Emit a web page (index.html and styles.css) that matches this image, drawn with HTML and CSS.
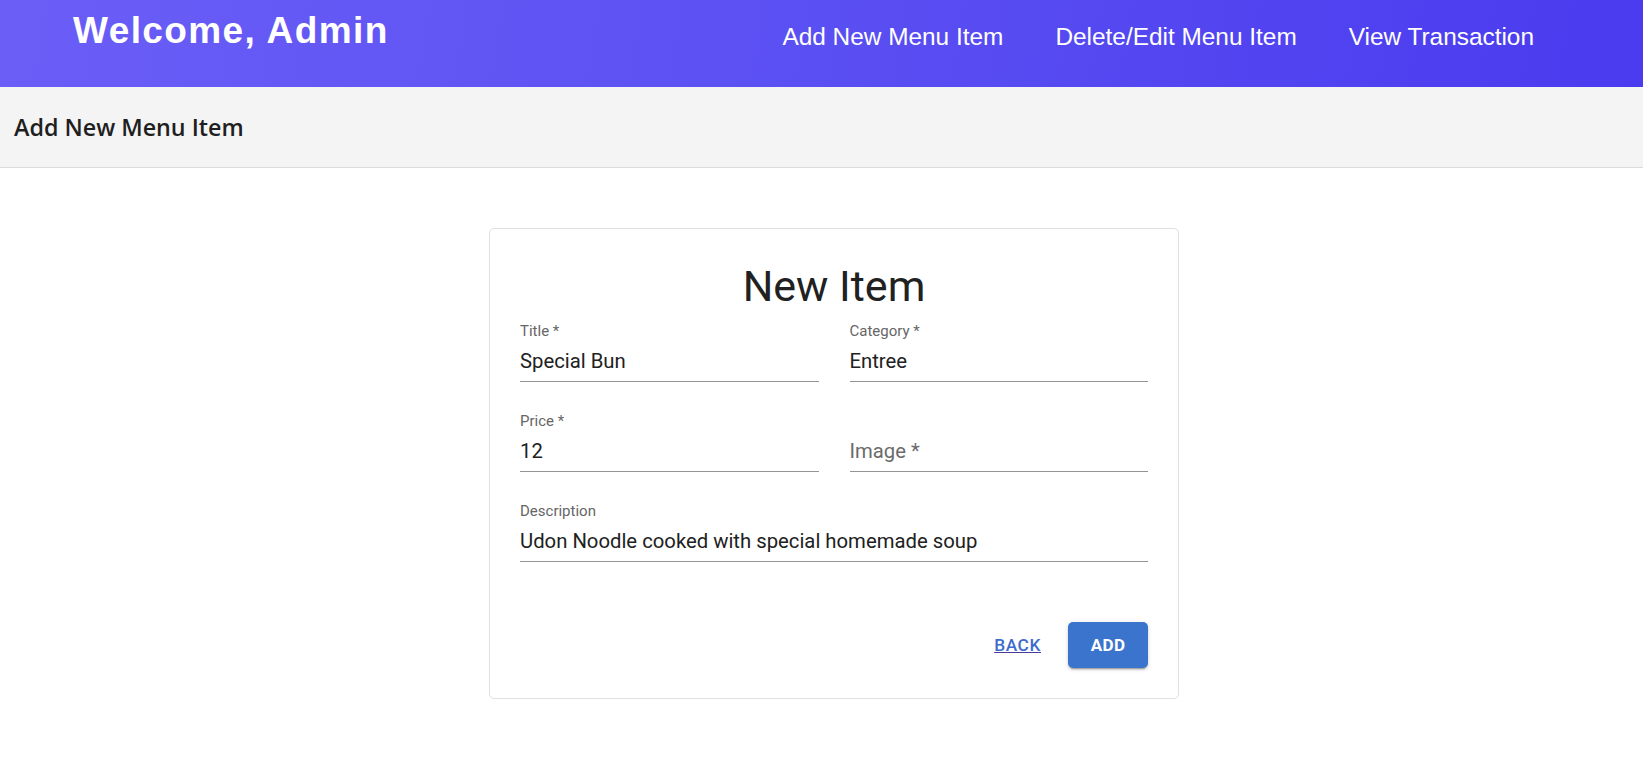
FILE: index.html
```html
<!DOCTYPE html>
<html lang="en">
<head>
<meta charset="utf-8">
<title>Add New Menu Item</title>
<link rel="stylesheet" href="styles.css">
</head>
<body>
<header class="topbar">
  <h1 class="welcome">Welcome, Admin</h1>
  <nav class="nav">
    <a class="nav-link" href="#">Add New Menu Item</a>
    <a class="nav-link" href="#">Delete/Edit Menu Item</a>
    <a class="nav-link" href="#">View Transaction</a>
  </nav>
</header>
<div class="subbar">
  <h2 class="subbar-title">Add New Menu Item</h2>
</div>
<main class="content">
  <form class="card">
    <h3 class="card-title">New Item</h3>
    <div class="grid">
      <div class="field">
        <label class="field-label">Title *</label>
        <div class="field-input">Special Bun</div>
      </div>
      <div class="field">
        <label class="field-label">Category *</label>
        <div class="field-input">Entree</div>
      </div>
      <div class="field">
        <label class="field-label">Price *</label>
        <div class="field-input">12</div>
      </div>
      <div class="field">
        <label class="field-label field-label-empty">&nbsp;</label>
        <div class="field-input field-placeholder">Image *</div>
      </div>
      <div class="field field-wide">
        <label class="field-label">Description</label>
        <div class="field-input">Udon Noodle cooked with special homemade soup</div>
      </div>
    </div>
    <div class="actions">
      <a class="btn-back" href="#">Back</a>
      <button class="btn-add" type="button">Add</button>
    </div>
  </form>
</main>
</body>
</html>
```
FILE: styles.css
```css
* { box-sizing: border-box; }
html, body { margin: 0; padding: 0; }
body {
  background: #ffffff;
  font-family: Roboto, "Liberation Sans", Arial, sans-serif;
  color: #212121;
}

.topbar {
  height: 87px;
  display: flex;
  justify-content: space-between;
  align-items: flex-start;
  background: linear-gradient(100deg, #6b5ef7 0%, #5a4ff2 50%, #4a3bef 100%);
  color: #ffffff;
  padding: 0 109px 0 73px;
}
.welcome {
  margin: 10px 0 0;
  font-family: "Liberation Sans", Arial, sans-serif;
  font-weight: 700;
  font-size: 37px;
  letter-spacing: 1.4px;
  line-height: 1.15;
}
.nav {
  display: flex;
  gap: 52px;
  margin-top: 23px;
}
.nav-link {
  color: #ffffff;
  text-decoration: none;
  font-family: "Liberation Sans", Arial, sans-serif;
  font-size: 24.4px;
  line-height: 1.15;
}

.subbar {
  height: 81px;
  background: #f4f4f4;
  border-bottom: 1px solid #dcdcdc;
  display: flex;
  align-items: center;
  padding-left: 14px;
}
.subbar-title {
  margin: 0;
  font-family: "Open Sans", "Noto Sans", sans-serif;
  font-weight: 600;
  font-size: 23.3px;
  color: #1f1f1f;
  padding-bottom: 1px;
}

.content {
  display: flex;
  justify-content: center;
  padding: 60px 0 40px 25px;
}
.card {
  width: 690px;
  border: 1px solid #e0e0e0;
  border-radius: 5px;
  padding: 32px 30px 30px;
  background: #fff;
}
.card-title {
  margin: 0 0 11px;
  text-align: center;
  font-weight: 400;
  font-size: 43px;
  line-height: 50px;
  color: #212121;
}

.grid {
  display: grid;
  grid-template-columns: 1fr 1fr;
  column-gap: 31px;
  row-gap: 30px;
}
.field-wide { grid-column: 1 / span 2; }
.field-label {
  display: block;
  font-size: 15px;
  line-height: 18px;
  color: #666666;
  margin-bottom: 9px;
}
.field-input {
  font-size: 20.3px;
  line-height: 24px;
  color: #212121;
  padding-bottom: 8px;
  border-bottom: 1px solid #949494;
}
.field-placeholder { color: #6b6b6b; }

.actions {
  display: flex;
  justify-content: flex-end;
  align-items: center;
  margin-top: 60px;
  gap: 27px;
}
.btn-back {
  font-size: 17.3px;
  font-weight: 500;
  text-transform: uppercase;
  letter-spacing: 0.6px;
  color: #3d6bcb;
  text-decoration: underline;
  text-decoration-color: #4a3a9a;
}
.btn-add {
  height: 46px;
  width: 80px;
  border: none;
  border-radius: 5px;
  background: #3a74cc;
  color: #ffffff;
  font-family: Roboto, sans-serif;
  font-size: 17px;
  font-weight: 700;
  text-transform: uppercase;
  letter-spacing: 0.4px;
  box-shadow: 0 3px 1px -2px rgba(0,0,0,0.2), 0 2px 2px 0 rgba(0,0,0,0.14), 0 1px 5px 0 rgba(0,0,0,0.12);
  cursor: pointer;
}
```
